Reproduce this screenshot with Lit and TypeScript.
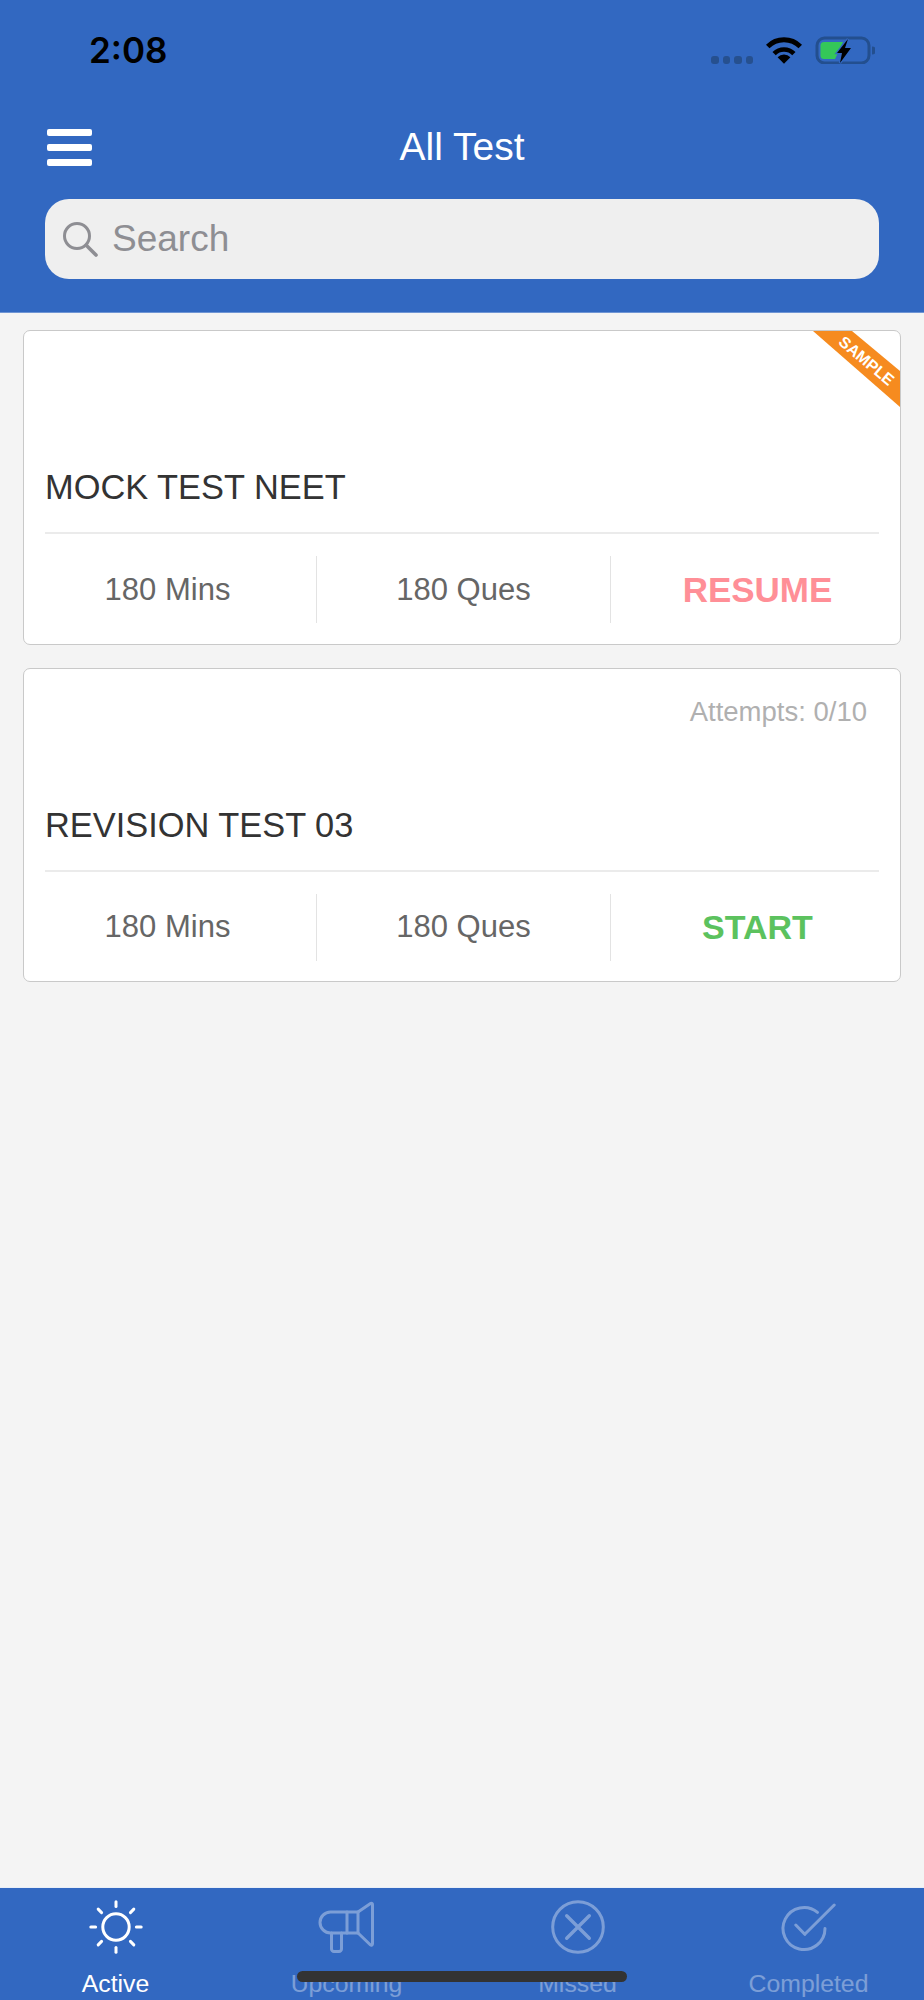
import { LitElement, html, css, svg } from 'lit'
import { customElement } from 'lit/decorators.js'
import { classMap } from 'lit/directives/class-map.js'

const sunRays = [0, 45, 90, 135, 180, 225, 270, 315]

const tabIcons = {
	sun: svg`
		<circle cx="30" cy="30" r="13.2" />
		${sunRays.map(
			(deg) => svg`<line x1="30" y1="4.8" x2="30" y2="9.6" transform="rotate(${deg} 30 30)" />`,
		)}
	`,
	megaphone: svg`
		<path d="M41 15H13.5a10.5 10.5 0 0 0 0 21H41Z" />
		<path d="M30 15V36" />
		<path d="M41 15L53.5 6.5a1.2 1.2 0 0 1 2 1V47a1.2 1.2 0 0 1-2 1L41 36" />
		<path d="M14.5 36V52a2.5 2.5 0 0 0 2.5 2.5h5a2.5 2.5 0 0 0 2.5-2.5V36" />
	`,
	cross: svg`
		<circle cx="30" cy="30" r="25.3" />
		<path d="M18.7 18.7L41.3 41.3M41.3 18.7L18.7 41.3" stroke-width="3.4" />
	`,
	check: svg`
		<path d="M38.5 15.4A21 21 0 1 0 46 31.5" />
		<path d="M16.8 28L25.8 37.3L55.2 8" />
	`,
}

const tabs = [
	{ label: 'Active', icon: tabIcons.sun, active: true },
	{ label: 'Upcoming', icon: tabIcons.megaphone, active: false },
	{ label: 'Missed', icon: tabIcons.cross, active: false },
	{ label: 'Completed', icon: tabIcons.check, active: false },
]

const tests = [
	{ title: 'MOCK TEST NEET', mins: '180 Mins', ques: '180 Ques', action: 'RESUME', kind: 'resume', sample: true },
	{ title: 'REVISION TEST 03', mins: '180 Mins', ques: '180 Ques', action: 'START', kind: 'start', attempts: 'Attempts: 0/10' },
]

@customElement('app-root')
export class AppRoot extends LitElement {
	static styles = css`
		:host {
			display: block;
			font-family: 'Liberation Sans', Arial, sans-serif;
		}
		.page {
			position: relative;
			display: flex;
			flex-direction: column;
			height: 2000px;
			overflow: hidden;
			background: #f4f4f4;
		}

		.header {
			background: #3268c1;
			border-bottom: 1px solid #6f95d4;
			padding: 37px 45px 33px;
			box-sizing: border-box;
			height: 313px;
		}
		.status {
			display: flex;
			justify-content: space-between;
			align-items: flex-start;
			height: 27px;
			padding: 0 4px 0 44px;
		}
		.time {
			font-family: Inter, sans-serif;
			font-weight: 600;
			font-size: 35px;
			line-height: 27px;
			color: #000;
		}
		.status-icons {
			display: flex;
			align-items: flex-start;
			height: 27px;
		}
		.dots {
			display: flex;
			gap: 4px;
			margin: 19px 13px 0 0;
		}
		.dots span {
			width: 7.5px;
			height: 7.5px;
			border-radius: 3px;
			background: #26508f;
		}
		.wifi {
			display: block;
			width: 36px;
			height: 27px;
			margin-right: 13px;
		}
		.battery {
			display: block;
			width: 60px;
			height: 28px;
			margin-top: -1px;
		}

		.nav {
			display: grid;
			grid-template-columns: 1fr auto 1fr;
			align-items: center;
			height: 50px;
			margin-top: 58px;
		}
		.menu {
			display: flex;
			flex-direction: column;
			gap: 8px;
			width: 45px;
			margin-left: 2px;
		}
		.menu span {
			height: 7px;
			border-radius: 2px;
			background: #fff;
		}
		.title {
			font-size: 39px;
			color: #fff;
		}

		.search {
			display: flex;
			align-items: center;
			gap: 13px;
			height: 80px;
			margin-top: 27px;
			padding-left: 17px;
			box-sizing: border-box;
			border-radius: 24px;
			background: #efefef;
			color: #8e8e93;
			font-size: 37px;
		}
		.search svg {
			display: block;
			width: 37px;
			height: 37px;
		}

		.cards {
			display: flex;
			flex-direction: column;
			gap: 23px;
			padding: 17px 23px 0;
		}
		.card {
			position: relative;
			overflow: hidden;
			box-sizing: border-box;
			height: 314.5px;
			background: #fff;
			border: 1px solid #c9c9c9;
			border-radius: 7px;
		}
		.meta {
			box-sizing: border-box;
			height: 136px;
			padding: 27px 33px 0 0;
			text-align: right;
			font-size: 27.5px;
			line-height: 32px;
			color: #b0b0b0;
		}
		.name {
			margin: 0 21px;
			padding-bottom: 25px;
			border-bottom: 2px solid #ebebeb;
			font-size: 34.4px;
			line-height: 40px;
			color: #333;
		}
		.stats {
			display: grid;
			grid-template-columns: 292px 294px 1fr;
			height: 67px;
			margin-top: 22px;
		}
		.stat {
			display: flex;
			align-items: center;
			justify-content: center;
			font-size: 31px;
			color: #666;
		}
		.stat:first-child {
			padding-right: 5px;
		}
		.stat + .stat {
			border-left: 1px solid #e3e3e3;
		}
		.action {
			padding-left: 4px;
			font-weight: 700;
		}
		.action--resume {
			font-size: 35px;
			color: #ff8f97;
		}
		.action--start {
			font-size: 34px;
			color: #5cc25e;
		}

		.ribbon {
			position: absolute;
			top: 0;
			right: 0;
			width: 90px;
			height: 80px;
		}
		.ribbon polygon {
			fill: #f68b1f;
		}
		.ribbon text {
			font-weight: 700;
			font-size: 16px;
			fill: #fff;
			text-anchor: middle;
		}

		.tabbar {
			display: grid;
			grid-template-columns: repeat(4, 1fr);
			margin-top: auto;
			height: 112px;
			box-sizing: border-box;
			padding-top: 9px;
			background: #3268c1;
			box-shadow: 0 -1px 0 #e9eef7;
		}
		.tab {
			display: flex;
			flex-direction: column;
			align-items: center;
			font-size: 24.8px;
			line-height: 30px;
			color: #fff;
			opacity: 0.36;
		}
		.tab--active {
			opacity: 1;
		}
		.tab svg {
			display: block;
			width: 60px;
			height: 60px;
			margin-bottom: 12px;
			fill: none;
			stroke: #fff;
			stroke-width: 3;
			stroke-linecap: round;
			stroke-linejoin: round;
		}
		.home-bar {
			position: absolute;
			left: 297px;
			bottom: 18px;
			width: 330px;
			height: 11px;
			border-radius: 5.5px;
			background: #333;
		}
	`

	renderStatus() {
		return html`
			<div class="status">
				<div class="time">2:08</div>
				<div class="status-icons">
					<div class="dots"><span></span><span></span><span></span><span></span></div>
					<svg class="wifi" viewBox="0 0 36 27">
						<path d="M1.7 9.5A23 23 0 0 1 34.3 9.5" fill="none" stroke="#000" stroke-width="5" />
						<path d="M8.1 16.6A14 14 0 0 1 27.9 16.6" fill="none" stroke="#000" stroke-width="4.6" />
						<path d="M18 26.7L11.6 20.2A9 9 0 0 1 24.4 20.2Z" fill="#000" />
					</svg>
					<svg class="battery" viewBox="0 0 60 28">
						<rect x="2" y="2" width="52" height="25" rx="7.5" fill="none" stroke="#234f8f" stroke-width="3" />
						<path d="M57 10.5a3 3 0 0 1 0 8Z" fill="#234f8f" />
						<path d="M9 6H28L20 23H9a3.5 3.5 0 0 1-3.5-3.5V9.5A3.5 3.5 0 0 1 9 6Z" fill="#34c759" />
						<path d="M33 3L22 17H27L25 27L36 12H30Z" fill="#000" stroke="#3268c1" stroke-width="2.5" paint-order="stroke" />
					</svg>
				</div>
			</div>
		`
	}

	renderCard(test: (typeof tests)[number]) {
		return html`
			<div class="card">
				${test.sample
					? html`<svg class="ribbon" viewBox="0 0 90 80">
							<polygon points="3,0 42,0 90,40 90,76" />
							<text transform="translate(53 34) rotate(40)">SAMPLE</text>
						</svg>`
					: ''}
				<div class="meta">${test.attempts ?? ''}</div>
				<div class="name">${test.title}</div>
				<div class="stats">
					<div class="stat">${test.mins}</div>
					<div class="stat">${test.ques}</div>
					<div class="stat action action--${test.kind}">${test.action}</div>
				</div>
			</div>
		`
	}

	render() {
		return html`
			<div class="page">
				<div class="header">
					${this.renderStatus()}
					<div class="nav">
						<div class="menu"><span></span><span></span><span></span></div>
						<div class="title">All Test</div>
					</div>
					<div class="search">
						<svg viewBox="0 0 37 37" fill="none" stroke="#8e8e93" stroke-width="3" stroke-linecap="round">
							<circle cx="15" cy="15" r="12.5" />
							<path d="M24.5 24.5L34 34" stroke-width="3.6" />
						</svg>
						<span>Search</span>
					</div>
				</div>
				<div class="cards">${tests.map((test) => this.renderCard(test))}</div>
				<div class="tabbar">
					${tabs.map(
						(tab) => html`
							<div class=${classMap({ tab: true, 'tab--active': tab.active })}>
								<svg viewBox="0 0 60 60">${tab.icon}</svg>
								<span>${tab.label}</span>
							</div>
						`,
					)}
				</div>
				<div class="home-bar"></div>
			</div>
		`
	}
}
